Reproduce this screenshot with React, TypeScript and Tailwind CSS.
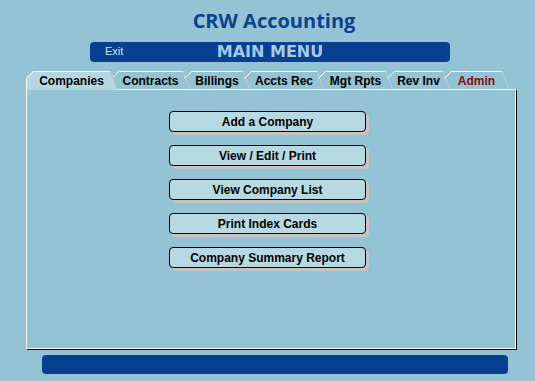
const tabs = [
  { label: 'Companies', w: 91, cls: 'w-[91px]', active: true },
  { label: 'Contracts', w: 79, cls: 'w-[79px] -ml-[6px]' },
  { label: 'Billings', w: 66, cls: 'w-[66px] -ml-[6px]' },
  { label: 'Accts Rec', w: 80, cls: 'w-[80px] -ml-[6px]' },
  { label: 'Mgt Rpts', w: 75, cls: 'w-[75px] -ml-[6px]' },
  { label: 'Rev Inv', w: 63, cls: 'w-[63px] -ml-[6px]' },
  { label: 'Admin', w: 65, cls: 'w-[65px] -ml-[6px]', red: true },
]

const actions = ['Add a Company', 'View / Edit / Print', 'View Company List', 'Print Index Cards', 'Company Summary Report']

function Tab({ label, w, cls, active, red }: { label: string; w: number; cls: string; active?: boolean; red?: boolean }) {
  const h = active ? 19 : 18
  return (
    <div className={`relative flex shrink-0 items-start justify-center ${cls} ${active ? 'z-10 h-[19px]' : 'h-[18px]'}`}>
      <svg className="absolute inset-0" width={w} height={h} viewBox={`0 0 ${w} ${h}`}>
        {active && <polygon points={`0,${h} 0,7 7,0 ${w - 7},0 ${w},18 ${w},${h}`} fill="#b5d7e1" />}
        <polyline
          points={active ? `0.5,${h} 0.5,7 7.5,0.5 ${w - 7},0.5` : `0.5,7.5 7.5,0.5 ${w - 7},0.5`}
          fill="none"
          stroke="#ffffff"
          strokeWidth="1"
        />
        <line x1={w - 7} y1="0.5" x2={w - 0.5} y2="18" stroke="#c4c9cc" strokeWidth="1" />
      </svg>
      <span
        className={`relative h-[18px] leading-[18px] pt-[1px] text-[12px] font-bold font-['Liberation_Sans',Arial,sans-serif] ${red ? 'text-[#8c0a0a]' : 'text-black'}`}
      >
        {label}
      </span>
    </div>
  )
}

export default function App() {
  return (
    <div className="w-[535px] h-[381px] bg-[#93c3d4] overflow-hidden">
      {/* Title */}
      <div className="flex justify-center pl-[13px] pt-[7px]">
        <h1 className="text-[20px] leading-[28px] font-bold text-[#0b428f] font-['Open_Sans',sans-serif]">CRW Accounting</h1>
      </div>

      {/* Header bar */}
      <div className="ml-[90px] mt-[7px] w-[360px] h-[20px] rounded-[4px] bg-[#083f90] grid grid-cols-[1fr_auto_1fr] items-center">
        <span className="pl-[15px] -mt-[2px] text-[11px] text-[#d6e5f0] font-['Liberation_Sans',Arial,sans-serif]">Exit</span>
        <span className="text-[16px] leading-[20px] font-bold text-[#a5c9e6] font-['DejaVu_Sans',Verdana,sans-serif]">MAIN MENU</span>
        <span />
      </div>

      {/* Tabs */}
      <div className="ml-[26px] mt-[9px] flex h-[18px] items-start">
        {tabs.map(t => (
          <Tab key={t.label} {...t} />
        ))}
      </div>

      {/* Panel */}
      <div className="ml-[26px] w-[490px] h-[260px] border border-white shadow-[1px_1px_0_#000] pt-[21px] flex flex-col gap-[13px]">
        {actions.map(a => (
          <button
            key={a}
            className="ml-[142px] w-[197px] h-[21px] rounded-[4px] border border-black bg-[#b7d9e2] shadow-[3px_3px_0_#c4c4c4] flex items-center justify-center text-[12px] leading-none font-bold text-black font-['Liberation_Sans',Arial,sans-serif]"
          >
            {a}
          </button>
        ))}
      </div>

      {/* Footer bar */}
      <div className="ml-[42px] mt-[6px] w-[466px] h-[19px] rounded-[4px] bg-[#083f90]" />
    </div>
  )
}
